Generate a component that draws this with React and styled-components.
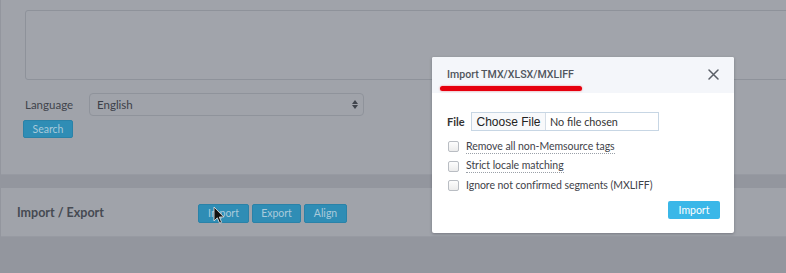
import React from "react";
import styled, { createGlobalStyle } from "styled-components";

const Global = createGlobalStyle`
  html, body { margin: 0; padding: 0; }
  body {
    background: #93969e;
    font-family: Lato, "Open Sans", "Liberation Sans", sans-serif;
    overflow: hidden;
    width: 786px;
    height: 273px;
  }
`;

const Page = styled.div`
  position: relative;
  width: 786px;
  height: 273px;
  overflow: hidden;
  display: flex;
  flex-direction: column;
`;

const TopPanel = styled.section`
  background: #a0a3aa;
  height: 174px;
  box-sizing: border-box;
  padding: 10px 0 0 24px;
  box-shadow: 0 1px 0 #979aa2;
  margin-left: 1px;
`;

const TextArea = styled.div`
  width: 800px;
  height: 70px;
  box-sizing: border-box;
  border: 1px solid #8e929a;
  border-radius: 3px;
  background: #a1a4ab;
`;

const FieldRow = styled.div`
  display: flex;
  align-items: center;
  margin-top: 13px;
  height: 23px;
`;

const Label = styled.span`
  width: 64px;
  font-size: 11.5px;
  color: #40444c;
`;

const Select = styled.div`
  width: 275px;
  height: 23px;
  box-sizing: border-box;
  border: 1px solid #8f939b;
  border-radius: 4px;
  display: flex;
  align-items: center;
  justify-content: space-between;
  padding: 0 5px 0 7px;
  font-size: 11.5px;
  color: #3c4048;
`;

const Arrows = styled.span`
  display: flex;
  flex-direction: column;
  gap: 1px;
  & > i {
    width: 0;
    height: 0;
    border-left: 3px solid transparent;
    border-right: 3px solid transparent;
  }
  & > i:first-child { border-bottom: 4px solid #40444c; }
  & > i:last-child { border-top: 4px solid #40444c; }
`;

const DimButton = styled.button`
  height: ${(p) => p.$h || 19}px;
  width: ${(p) => p.$w}px;
  padding: 0;
  border: 1px solid #2a82a8;
  border-radius: 2px;
  background: #2f8db5;
  color: #a9cadb;
  font-family: inherit;
  font-size: 10.5px;
  cursor: default;
`;

const SearchButton = styled(DimButton)`
  margin-top: 4px;
  margin-left: -2px;
  display: block;
`;

const Gap = styled.div`
  height: 14px;
`;

const BottomPanel = styled.section`
  background: #a0a3aa;
  height: 48px;
  margin-left: 1px;
  box-sizing: border-box;
  padding-left: 16px;
  display: flex;
  align-items: center;
  box-shadow: 0 1px 0 #979aa2;
`;

const PanelTitle = styled.h2`
  margin: 0;
  width: 181px;
  font-size: 12.5px;
  font-weight: 700;
  color: #464a52;
`;

const ButtonGroup = styled.div`
  display: flex;
  gap: 3px;
  margin-top: 2px;
`;

const Modal = styled.div`
  position: absolute;
  left: 432px;
  top: 57px;
  width: 302px;
  height: 176px;
  background: #ffffff;
  border-radius: 2px;
  box-shadow: 0 1px 3px rgba(40, 44, 55, 0.35);
  display: flex;
  flex-direction: column;
`;

const ModalHeader = styled.header`
  position: relative;
  height: 36px;
  background: #f4f6fa;
  border-radius: 2px 2px 0 0;
  display: flex;
  align-items: center;
  justify-content: space-between;
  padding: 0 15px;
`;

const ModalTitle = styled.h3`
  margin: 0;
  font-family: Roboto, Lato, sans-serif;
  font-size: 10.6px;
  font-weight: 500;
  color: #50555d;
  margin-top: -1px;
`;

const Close = styled.svg`
  margin-top: -1px;
`;

const Highlight = styled.span`
  position: absolute;
  left: 8px;
  top: 29px;
  width: 142px;
  height: 5px;
  border-radius: 3px;
  background: #e6000e;
  box-shadow: 0 0 2px rgba(230, 0, 14, 0.5);
`;

const ModalBody = styled.div`
  flex: 1;
  padding: 19px 14px 14px 15px;
  display: flex;
  flex-direction: column;
`;

const FileRow = styled.div`
  display: flex;
  align-items: center;
  height: 19px;
  margin-bottom: 6px;
`;

const FileLabel = styled.span`
  width: 24px;
  font-size: 11px;
  font-weight: 700;
  color: #333;
`;

const FileInput = styled.div`
  width: 188px;
  height: 19px;
  box-sizing: border-box;
  border: 1px solid #c7d6e4;
  display: flex;
  align-items: stretch;
`;

const ChooseButton = styled.span`
  width: 73px;
  background: #f8f9fb;
  border-right: 1px solid #d5dde6;
  font-family: "Liberation Sans", Arial, sans-serif;
  font-size: 12px;
  color: #222;
  display: flex;
  align-items: center;
  justify-content: center;
`;

const FileName = styled.span`
  padding-left: 4px;
  font-size: 10.8px;
  color: #333;
  display: flex;
  align-items: center;
`;

const CheckRow = styled.label`
  display: flex;
  align-items: center;
  height: 19.5px;
  padding-left: 1px;
`;

const Box = styled.span`
  width: 9px;
  height: 9px;
  border: 1px solid #b9bdc3;
  border-radius: 2px;
  background: linear-gradient(#fdfdfd, #ececec);
  margin-right: 7px;
`;

const CheckText = styled.span`
  font-size: 10.5px;
  letter-spacing: -0.05px;
  color: #3f434a;
  border-bottom: ${(p) => (p.$hint ? "1px dotted #9aa0a8" : "1px solid transparent")};
  line-height: 13px;
`;

const Footer = styled.div`
  display: flex;
  justify-content: flex-end;
  margin-top: 5px;
`;

const PrimaryButton = styled.button`
  width: 52px;
  height: 18px;
  padding: 0;
  border: none;
  border-radius: 2px;
  background: #3ab7e8;
  color: #fff;
  font-family: inherit;
  font-size: 10.5px;
`;

const Cursor = styled.svg`
  position: absolute;
  left: 213px;
  top: 206px;
`;

export default function App() {
  return (
    <Page>
      <Global />
      <TopPanel>
        <TextArea />
        <FieldRow>
          <Label>Language</Label>
          <Select>
            <span>English</span>
            <Arrows>
              <i />
              <i />
            </Arrows>
          </Select>
        </FieldRow>
        <SearchButton $w={50} $h={18}>Search</SearchButton>
      </TopPanel>
      <Gap />
      <BottomPanel>
        <PanelTitle>Import / Export</PanelTitle>
        <ButtonGroup>
          <DimButton $w={51}>Import</DimButton>
          <DimButton $w={49}>Export</DimButton>
          <DimButton $w={43}>Align</DimButton>
        </ButtonGroup>
      </BottomPanel>
      <Cursor width="12" height="19" viewBox="0 0 12 19">
        <path
          d="M1 1 L1 15 L4.3 11.8 L6.6 17.2 L8.6 16.3 L6.3 11 L10.8 11 Z"
          fill="#111"
          stroke="#ddd"
          strokeWidth="0.9"
          strokeLinejoin="round"
        />
      </Cursor>
      <Modal>
        <ModalHeader>
          <ModalTitle>Import TMX/XLSX/MXLIFF</ModalTitle>
          <Close width="11" height="11" viewBox="0 0 11 11">
            <path d="M1 1 L10 10 M10 1 L1 10" stroke="#5a5f67" strokeWidth="1.5" strokeLinecap="round" />
          </Close>
          <Highlight />
        </ModalHeader>
        <ModalBody>
          <FileRow>
            <FileLabel>File</FileLabel>
            <FileInput>
              <ChooseButton>Choose File</ChooseButton>
              <FileName>No file chosen</FileName>
            </FileInput>
          </FileRow>
          <CheckRow>
            <Box />
            <CheckText $hint>Remove all non-Memsource tags</CheckText>
          </CheckRow>
          <CheckRow>
            <Box />
            <CheckText $hint>Strict locale matching</CheckText>
          </CheckRow>
          <CheckRow>
            <Box />
            <CheckText>Ignore not confirmed segments (MXLIFF)</CheckText>
          </CheckRow>
          <Footer>
            <PrimaryButton>Import</PrimaryButton>
          </Footer>
        </ModalBody>
      </Modal>
    </Page>
  );
}
